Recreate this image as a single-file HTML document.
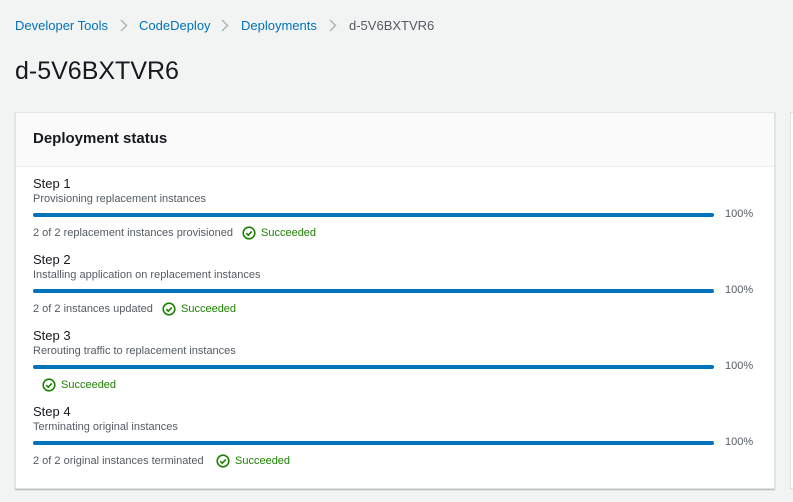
<!DOCTYPE html>
<html><head><meta charset="utf-8"><style>
body{margin:0;width:793px;height:502px;background:#f2f3f3;font-family:"Liberation Sans",sans-serif;position:relative;overflow:hidden}
.a{position:absolute;white-space:nowrap}
.bc{top:18px;font-size:13px;color:#0073bb}
.sep{position:absolute;top:18px;width:10px;height:15px}
.card{position:absolute;left:15px;top:112px;width:758px;height:375px;background:#fff;border:1px solid #e1e4e4;box-shadow:0 1px 1px rgba(0,28,36,.3)}
.hdr{position:absolute;left:0;top:0;width:758px;height:53px;background:#fafafa;border-bottom:1px solid #eaeded}
.st{font-size:13px;color:#16191f}
.ds{font-size:11px;color:#545b64}
.bar{position:absolute;left:33px;width:681px;height:4px;background:#0073bb;border-radius:2px}
.pc{font-size:11px;color:#545b64;left:725px}
.info{font-size:11px;color:#545b64}
.ok{font-size:11px;color:#1d8102}
.ic{position:absolute;width:14px;height:14px}
</style></head><body>
<div class="a bc" style="left:15px">Developer Tools</div>
<svg class="sep" style="left:119px" viewBox="0 0 10 15"><path d="M2 2l5.5 5.5L2 13" fill="none" stroke="#aab7b8" stroke-width="1.5"/></svg>
<div class="a bc" style="left:139px">CodeDeploy</div>
<svg class="sep" style="left:220px" viewBox="0 0 10 15"><path d="M2 2l5.5 5.5L2 13" fill="none" stroke="#aab7b8" stroke-width="1.5"/></svg>
<div class="a bc" style="left:241px">Deployments</div>
<svg class="sep" style="left:328px" viewBox="0 0 10 15"><path d="M2 2l5.5 5.5L2 13" fill="none" stroke="#aab7b8" stroke-width="1.5"/></svg>
<div class="a" style="left:349px;top:18px;font-size:13px;color:#545b64">d-5V6BXTVR6</div>
<div class="a" style="left:15px;top:57px;font-size:25px;color:#16191f">d-5V6BXTVR6</div>
<div class="a" style="left:790px;top:112px;width:10px;height:375px;background:#fff;border:1px solid #e1e4e4"></div>
<div class="card"><div class="hdr"></div></div>
<div class="a" style="left:33px;top:130px;font-size:15px;font-weight:bold;color:#16191f">Deployment status</div>

<div class="a st" style="left:33px;top:176px">Step 1</div>
<div class="a ds" style="left:33px;top:193px">Provisioning replacement instances</div>
<div class="bar" style="top:213px"></div><div class="a pc" style="top:208px">100%</div>
<div class="a info" style="left:33px;top:227px">2 of 2 replacement instances provisioned</div>
<svg class="ic" style="left:242px;top:226px" viewBox="0 0 14 14"><circle cx="7" cy="7" r="5.8" fill="none" stroke="#1d8102" stroke-width="1.6"/><path d="M4.3 7.2l2 2 3.5-3.8" fill="none" stroke="#1d8102" stroke-width="1.6"/></svg>
<div class="a ok" style="left:261px;top:227px">Succeeded</div>

<div class="a st" style="left:33px;top:252px">Step 2</div>
<div class="a ds" style="left:33px;top:269px">Installing application on replacement instances</div>
<div class="bar" style="top:289px"></div><div class="a pc" style="top:284px">100%</div>
<div class="a info" style="left:33px;top:303px">2 of 2 instances updated</div>
<svg class="ic" style="left:162px;top:302px" viewBox="0 0 14 14"><circle cx="7" cy="7" r="5.8" fill="none" stroke="#1d8102" stroke-width="1.6"/><path d="M4.3 7.2l2 2 3.5-3.8" fill="none" stroke="#1d8102" stroke-width="1.6"/></svg>
<div class="a ok" style="left:181px;top:303px">Succeeded</div>

<div class="a st" style="left:33px;top:328px">Step 3</div>
<div class="a ds" style="left:33px;top:345px">Rerouting traffic to replacement instances</div>
<div class="bar" style="top:365px"></div><div class="a pc" style="top:360px">100%</div>
<svg class="ic" style="left:42px;top:378px" viewBox="0 0 14 14"><circle cx="7" cy="7" r="5.8" fill="none" stroke="#1d8102" stroke-width="1.6"/><path d="M4.3 7.2l2 2 3.5-3.8" fill="none" stroke="#1d8102" stroke-width="1.6"/></svg>
<div class="a ok" style="left:61px;top:379px">Succeeded</div>

<div class="a st" style="left:33px;top:404px">Step 4</div>
<div class="a ds" style="left:33px;top:421px">Terminating original instances</div>
<div class="bar" style="top:441px"></div><div class="a pc" style="top:436px">100%</div>
<div class="a info" style="left:33px;top:455px">2 of 2 original instances terminated</div>
<svg class="ic" style="left:216px;top:454px" viewBox="0 0 14 14"><circle cx="7" cy="7" r="5.8" fill="none" stroke="#1d8102" stroke-width="1.6"/><path d="M4.3 7.2l2 2 3.5-3.8" fill="none" stroke="#1d8102" stroke-width="1.6"/></svg>
<div class="a ok" style="left:235px;top:455px">Succeeded</div>
</body></html>
